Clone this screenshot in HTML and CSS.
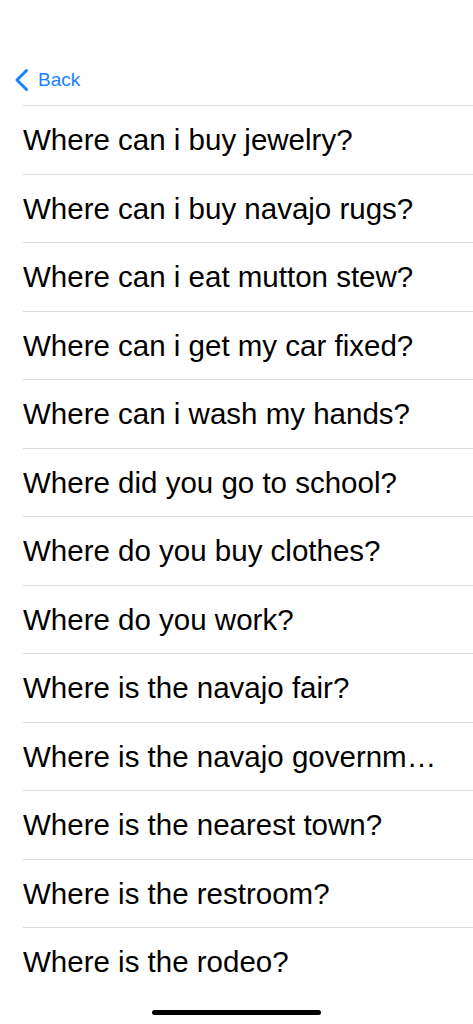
FILE: index.html
```html
<!DOCTYPE html>
<html lang="en">
<head>
  <meta charset="UTF-8" />
  <meta name="viewport" content="width=device-width, initial-scale=1.0"/>
  <title>Where questions</title>
  <link rel="stylesheet" href="styles.css">
</head>
<body>

  <div class="screen">
    <nav class="nav-bar">
      <a href="#" class="back-link">
        <svg class="chevron" width="16" height="24" viewBox="0 0 16 24">
          <path d="M12.5 2.5 L3 12 L12.5 21.5" fill="none" stroke="#1a82fb" stroke-width="3" stroke-linecap="round" stroke-linejoin="round"/>
        </svg>
        <span>Back</span>
      </a>
    </nav>

    <ul class="phrase-list">
      <li class="phrase">Where can i buy jewelry?</li>
      <li class="phrase">Where can i buy navajo rugs?</li>
      <li class="phrase">Where can i eat mutton stew?</li>
      <li class="phrase">Where can i get my car fixed?</li>
      <li class="phrase">Where can i wash my hands?</li>
      <li class="phrase">Where did you go to school?</li>
      <li class="phrase">Where do you buy clothes?</li>
      <li class="phrase">Where do you work?</li>
      <li class="phrase">Where is the navajo fair?</li>
      <li class="phrase">Where is the navajo governm…</li>
      <li class="phrase">Where is the nearest town?</li>
      <li class="phrase">Where is the restroom?</li>
      <li class="phrase">Where is the rodeo?</li>
    </ul>

    <div class="home-indicator"></div>
  </div>

</body>
</html>
```

FILE: styles.css
```css
* {
  box-sizing: border-box;
  margin: 0;
  padding: 0;
  font-family: 'Liberation Sans', Arial, sans-serif;
}

body {
  background-color: #fff;
  color: #000;
}

.screen {
  position: relative;
  width: 473px;
  height: 1024px;
  overflow: hidden;
}

.nav-bar {
  height: 105px;
  display: flex;
  align-items: flex-end;
  padding: 0 0 13px 14px;
}

.back-link {
  display: flex;
  align-items: center;
  gap: 8px;
  color: #1a82fb;
  text-decoration: none;
  font-size: 19px;
}

.chevron {
  display: block;
}

.phrase-list {
  list-style: none;
  margin-left: 23px;
}

.phrase {
  height: 68.5px;
  line-height: 67.5px;
  border-top: 1px solid #dcdcdc;
  font-size: 29.5px;
  white-space: nowrap;
  overflow: hidden;
}

.home-indicator {
  position: absolute;
  left: 152px;
  bottom: 9px;
  width: 169px;
  height: 5px;
  border-radius: 3px;
  background-color: #000;
}
```
